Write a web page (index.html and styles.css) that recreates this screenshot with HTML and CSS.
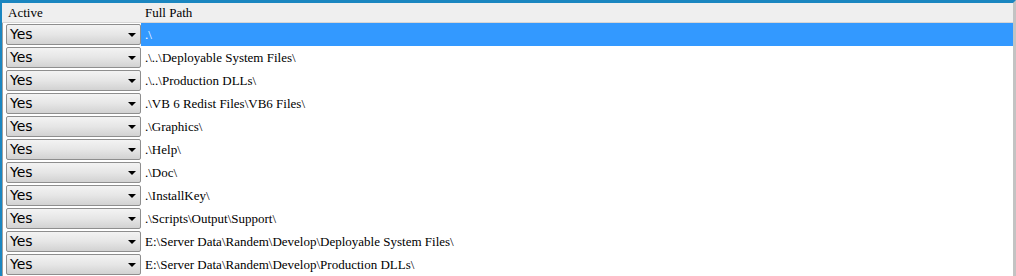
FILE: index.html
```html
<!DOCTYPE html>
<html>
<head>
	<title>Paths</title>
	<link rel="stylesheet" href="styles.css">
</head>
<body>
	<div class="frame">
		<div class="grid">
			<div class="head">Active</div>
			<div class="head path-head">Full Path</div>

			<div class="cell"><div class="combo">Yes<span class="arrow"></span></div></div>
			<div class="path selected">.\</div>

			<div class="cell"><div class="combo">Yes<span class="arrow"></span></div></div>
			<div class="path">.\..\Deployable System Files\</div>

			<div class="cell"><div class="combo">Yes<span class="arrow"></span></div></div>
			<div class="path">.\..\Production DLLs\</div>

			<div class="cell"><div class="combo">Yes<span class="arrow"></span></div></div>
			<div class="path">.\VB 6 Redist Files\VB6 Files\</div>

			<div class="cell"><div class="combo">Yes<span class="arrow"></span></div></div>
			<div class="path">.\Graphics\</div>

			<div class="cell"><div class="combo">Yes<span class="arrow"></span></div></div>
			<div class="path">.\Help\</div>

			<div class="cell"><div class="combo">Yes<span class="arrow"></span></div></div>
			<div class="path">.\Doc\</div>

			<div class="cell"><div class="combo">Yes<span class="arrow"></span></div></div>
			<div class="path">.\InstallKey\</div>

			<div class="cell"><div class="combo">Yes<span class="arrow"></span></div></div>
			<div class="path">.\Scripts\Output\Support\</div>

			<div class="cell"><div class="combo">Yes<span class="arrow"></span></div></div>
			<div class="path">E:\Server Data\Randem\Develop\Deployable System Files\</div>

			<div class="cell"><div class="combo">Yes<span class="arrow"></span></div></div>
			<div class="path">E:\Server Data\Randem\Develop\Production DLLs\</div>
		</div>
	</div>
</body>
</html>
```

FILE: styles.css
```css
body {
	margin: 0;
	width: 1016px;
	height: 276px;
	overflow: hidden;
	background: #ffffff;
}

.frame {
	height: 276px;
	border-top: 3px solid #1b86c0;
	border-left: 2px solid #1b86c0;
	border-right: 3px solid #c3c3c3;
	box-sizing: border-box;
	overflow: hidden;
}

.grid {
	display: grid;
	grid-template-columns: 139px 1fr;
	grid-auto-rows: 23px;
	grid-template-rows: 20px;
	font-family: "Liberation Serif", "Times New Roman", serif;
	font-size: 13px;
	color: #000;
}

.head {
	background: #efefef;
	border-bottom: 1px solid #d6d6d6;
	padding-left: 6px;
	line-height: 20px;
	box-sizing: border-box;
}

.path-head {
	padding-left: 4px;
}

.cell {
	padding: 1px 0 1px 3px;
	background: #ffffff;
	border-left: 1px solid #a0a0a0;
	box-sizing: border-box;
}

.combo {
	position: relative;
	height: 21px;
	border: 1px solid #8e8e8e;
	border-radius: 2px;
	background: linear-gradient(#f3f3f3, #e6e6e6 50%, #d2d2d2);
	box-sizing: border-box;
	padding-left: 3px;
	font-family: "DejaVu Sans", Verdana, sans-serif;
	font-size: 14px;
	line-height: 19px;
	color: #000;
}

.arrow {
	position: absolute;
	right: 4px;
	top: 8px;
	width: 0;
	height: 0;
	border-left: 4px solid transparent;
	border-right: 4px solid transparent;
	border-top: 4px solid #000;
}

.path {
	padding-left: 4px;
	line-height: 23px;
	white-space: nowrap;
}

.selected {
	background: #3399ff;
	color: #fff;
}
```
